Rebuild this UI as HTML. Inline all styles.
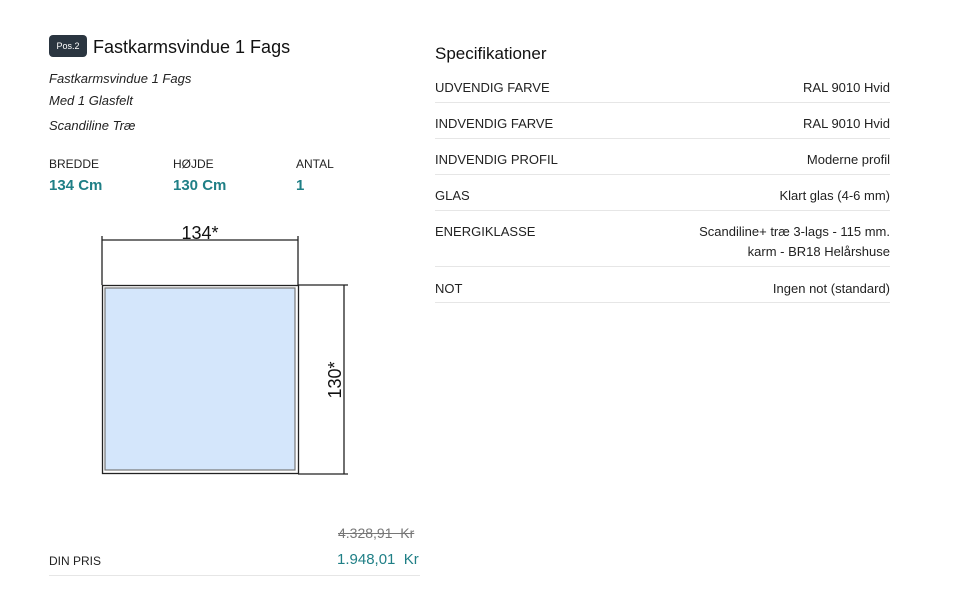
<!DOCTYPE html>
<html><head><meta charset="utf-8"><style>
body{margin:0;width:960px;height:604px;background:#fff;font-family:"Liberation Sans",sans-serif;color:#222;position:relative;overflow:hidden}
.a{position:absolute;white-space:nowrap}
.badge{left:49px;top:35px;width:38px;height:22px;background:#2a3540;border-radius:4px;color:#fff;font-size:9px;line-height:22px;text-align:center}
.it{font-style:italic;font-size:13px;color:#222}
.lbl{font-size:12px;color:#222}
.val{font-size:15px;font-weight:bold;color:#1f7f86}
.row{position:absolute;left:435px;width:455px;border-bottom:1px solid #e6e6e6;font-size:13px;line-height:20px}
.row .l{position:absolute;left:0;top:0}
.row .r{position:absolute;right:0;top:0;text-align:right}
</style></head><body>
<div class="a badge">Pos.2</div>
<div class="a" style="left:93px;top:37px;font-size:18px;color:#111">Fastkarmsvindue 1 Fags</div>
<div class="a it" style="left:49px;top:71px">Fastkarmsvindue 1 Fags</div>
<div class="a it" style="left:49px;top:93px">Med 1 Glasfelt</div>
<div class="a it" style="left:49px;top:118px">Scandiline Træ</div>
<div class="a lbl" style="left:49px;top:157px">BREDDE</div>
<div class="a lbl" style="left:173px;top:157px">HØJDE</div>
<div class="a lbl" style="left:296px;top:157px">ANTAL</div>
<div class="a val" style="left:49px;top:177px">134 Cm</div>
<div class="a val" style="left:173px;top:177px">130 Cm</div>
<div class="a val" style="left:296px;top:177px">1</div>
<svg class="a" style="left:0;top:0" width="430" height="500">
<g stroke="#222" stroke-width="1.3" fill="none">
<line x1="102" y1="240" x2="298" y2="240"/>
<line x1="102" y1="236" x2="102" y2="285"/>
<line x1="298" y1="236" x2="298" y2="285"/>
<line x1="298" y1="285" x2="348" y2="285"/>
<line x1="298" y1="474" x2="348" y2="474"/>
<line x1="344" y1="285" x2="344" y2="474"/>
<rect x="102.5" y="285.5" width="196" height="188"/>
</g>
<rect x="105" y="288" width="190" height="182" fill="#d4e6fb" stroke="#777" stroke-width="1.2"/>
<text x="200" y="239" text-anchor="middle" font-size="18" font-family="Liberation Sans" fill="#111">134*</text>
<text transform="translate(341,380) rotate(-90)" text-anchor="middle" font-size="18" font-family="Liberation Sans" fill="#111">130*</text>
</svg>
<div class="a" style="left:338px;top:525px;font-size:14px;color:#777;text-decoration:line-through">4.328,91&nbsp; Kr</div>
<div class="a lbl" style="left:49px;top:554px">DIN PRIS</div>
<div class="a" style="left:337px;top:551px;font-size:15px;color:#1f7f86">1.948,01&nbsp; Kr</div>
<div class="a" style="left:49px;top:575px;width:371px;border-top:1px solid #e6e6e6"></div>
<div class="a" style="left:435px;top:44px;font-size:17px;color:#111">Specifikationer</div>
<div class="row" style="top:78px;height:24px"><span class="l">UDVENDIG FARVE</span><span class="r">RAL 9010 Hvid</span></div>
<div class="row" style="top:114px;height:24px"><span class="l">INDVENDIG FARVE</span><span class="r">RAL 9010 Hvid</span></div>
<div class="row" style="top:150px;height:24px"><span class="l">INDVENDIG PROFIL</span><span class="r">Moderne profil</span></div>
<div class="row" style="top:186px;height:24px"><span class="l">GLAS</span><span class="r">Klart glas (4-6 mm)</span></div>
<div class="row" style="top:222px;height:44px"><span class="l">ENERGIKLASSE</span><span class="r">Scandiline+ træ 3-lags - 115 mm.<br>karm - BR18 Helårshuse</span></div>
<div class="row" style="top:279px;height:23px"><span class="l">NOT</span><span class="r">Ingen not (standard)</span></div>
</body></html>
